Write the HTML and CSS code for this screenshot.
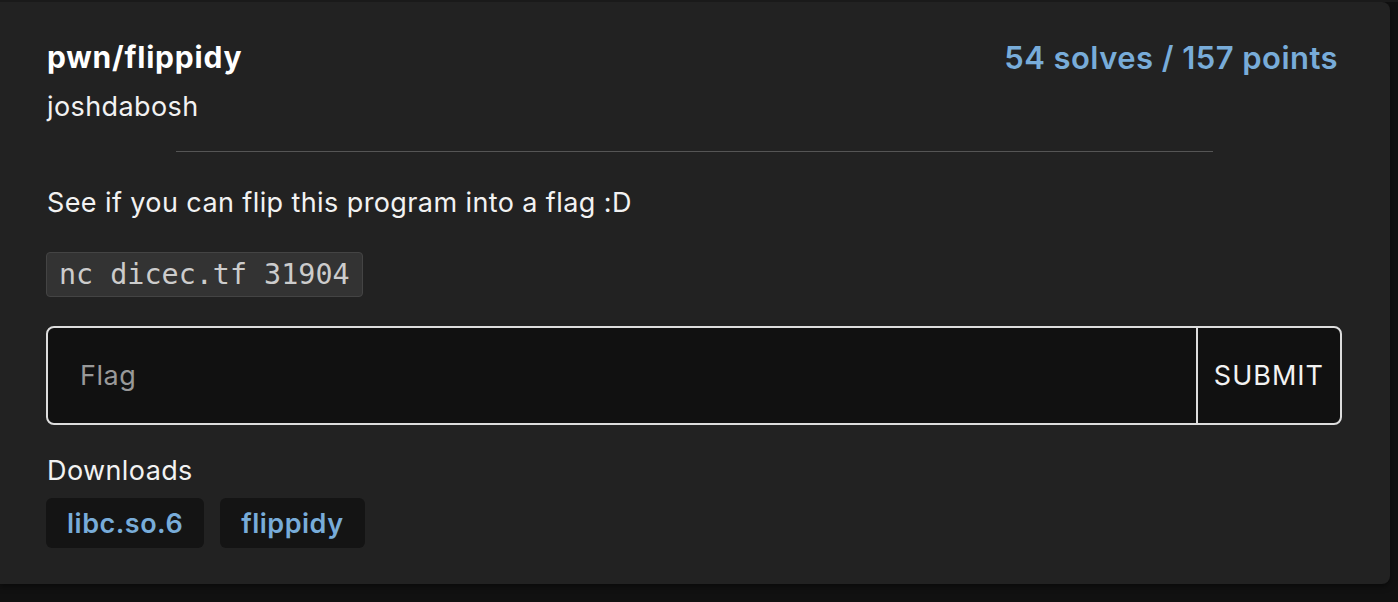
FILE: index.html
```html
<!DOCTYPE html>
<html>
<head>
<meta charset="utf-8">
<link rel="stylesheet" href="styles.css">
</head>
<body>
<div class="card">
  <div class="header">
    <div class="titles">
      <div class="title">pwn/flippidy</div>
      <div class="author">joshdabosh</div>
    </div>
    <div class="stats">54 solves / 157 points</div>
  </div>
  <hr class="divider">
  <p class="desc">See if you can flip this program into a flag :D</p>
  <code class="cmd">nc dicec.tf 31904</code>
  <form class="flagform">
    <input class="flaginput" type="text" placeholder="Flag">
    <button class="submit" type="button">SUBMIT</button>
  </form>
  <div class="dl-label">Downloads</div>
  <div class="downloads">
    <a class="dl">libc.so.6</a>
    <a class="dl">flippidy</a>
  </div>
</div>
</body>
</html>
```
FILE: styles.css
```css
html, body {
  margin: 0;
  padding: 0;
  background: #111111;
  height: 100%;
  overflow: hidden;
}
body {
  font-family: Inter, "Noto Sans", sans-serif;
  color: #f2f2f2;
  border-top: 2px solid #1a1a1a;
}
.card {
  width: 1390px;
  box-sizing: border-box;
  background: #222222;
  border-radius: 0 8px 8px 0;
  padding: 38px 48px 36px 46px;
  box-shadow: 0 2px 6px rgba(0,0,0,0.5);
  display: flex;
  flex-direction: column;
  align-items: flex-start;
}
.header {
  display: flex;
  justify-content: space-between;
  align-items: flex-start;
  align-self: stretch;
}
.title {
  font-size: 30px;
  font-weight: 700;
  line-height: 34px;
  letter-spacing: 0.8px;
  color: #ffffff;
  padding-left: 1px;
}
.author {
  font-size: 27px;
  line-height: 33px;
  letter-spacing: 0.4px;
  margin-top: 16px;
  padding-left: 1px;
}
.stats {
  font-size: 31px;
  font-weight: 600;
  line-height: 36px;
  letter-spacing: 0.45px;
  color: #78acd9;
  margin-right: 4px;
}
.divider {
  align-self: center;
  width: 80%;
  border: 0;
  height: 1px;
  background: #555555;
  margin: 28px 0 0 1px;
}
.desc {
  font-size: 27px;
  line-height: 33px;
  letter-spacing: 0.4px;
  margin: 34px 0 0;
  padding-left: 1px;
}
.cmd {
  font-family: "DejaVu Sans Mono", "Liberation Mono", monospace;
  font-size: 28.4px;
  line-height: 33px;
  color: #cccccc;
  background: #333333;
  border: 1px solid #444444;
  border-radius: 4px;
  padding: 5px 12px;
  margin-top: 33px;
}
.flagform {
  align-self: stretch;
  display: flex;
  margin: 29px 0 0;
  height: 99px;
  box-sizing: border-box;
  border: 2px solid #dddddd;
  border-radius: 8px;
  background: #111111;
  overflow: hidden;
}
.flaginput {
  flex: 1;
  background: transparent;
  border: 0;
  border-right: 2px solid #dddddd;
  outline: none;
  padding: 0 32px;
  font-family: Inter, "Noto Sans", sans-serif;
  font-size: 27px;
  letter-spacing: 0.5px;
  color: #f2f2f2;
}
.flaginput::placeholder {
  color: #999999;
}
.submit {
  background: transparent;
  border: 0;
  color: #f2f2f2;
  font-family: Inter, "Noto Sans", sans-serif;
  font-size: 27px;
  letter-spacing: 1px;
  padding: 0 16px 0 16px;
}
.dl-label {
  font-size: 27px;
  line-height: 33px;
  letter-spacing: 0.4px;
  margin-top: 29px;
  padding-left: 1px;
}
.downloads {
  display: flex;
  gap: 16px;
  margin-top: 11px;
}
.dl {
  background: #141414;
  border-radius: 6px;
  height: 50px;
  padding: 0 21px;
  display: flex;
  align-items: center;
  font-size: 27px;
  font-weight: 600;
  letter-spacing: 0.5px;
  color: #78acd9;
}
```
